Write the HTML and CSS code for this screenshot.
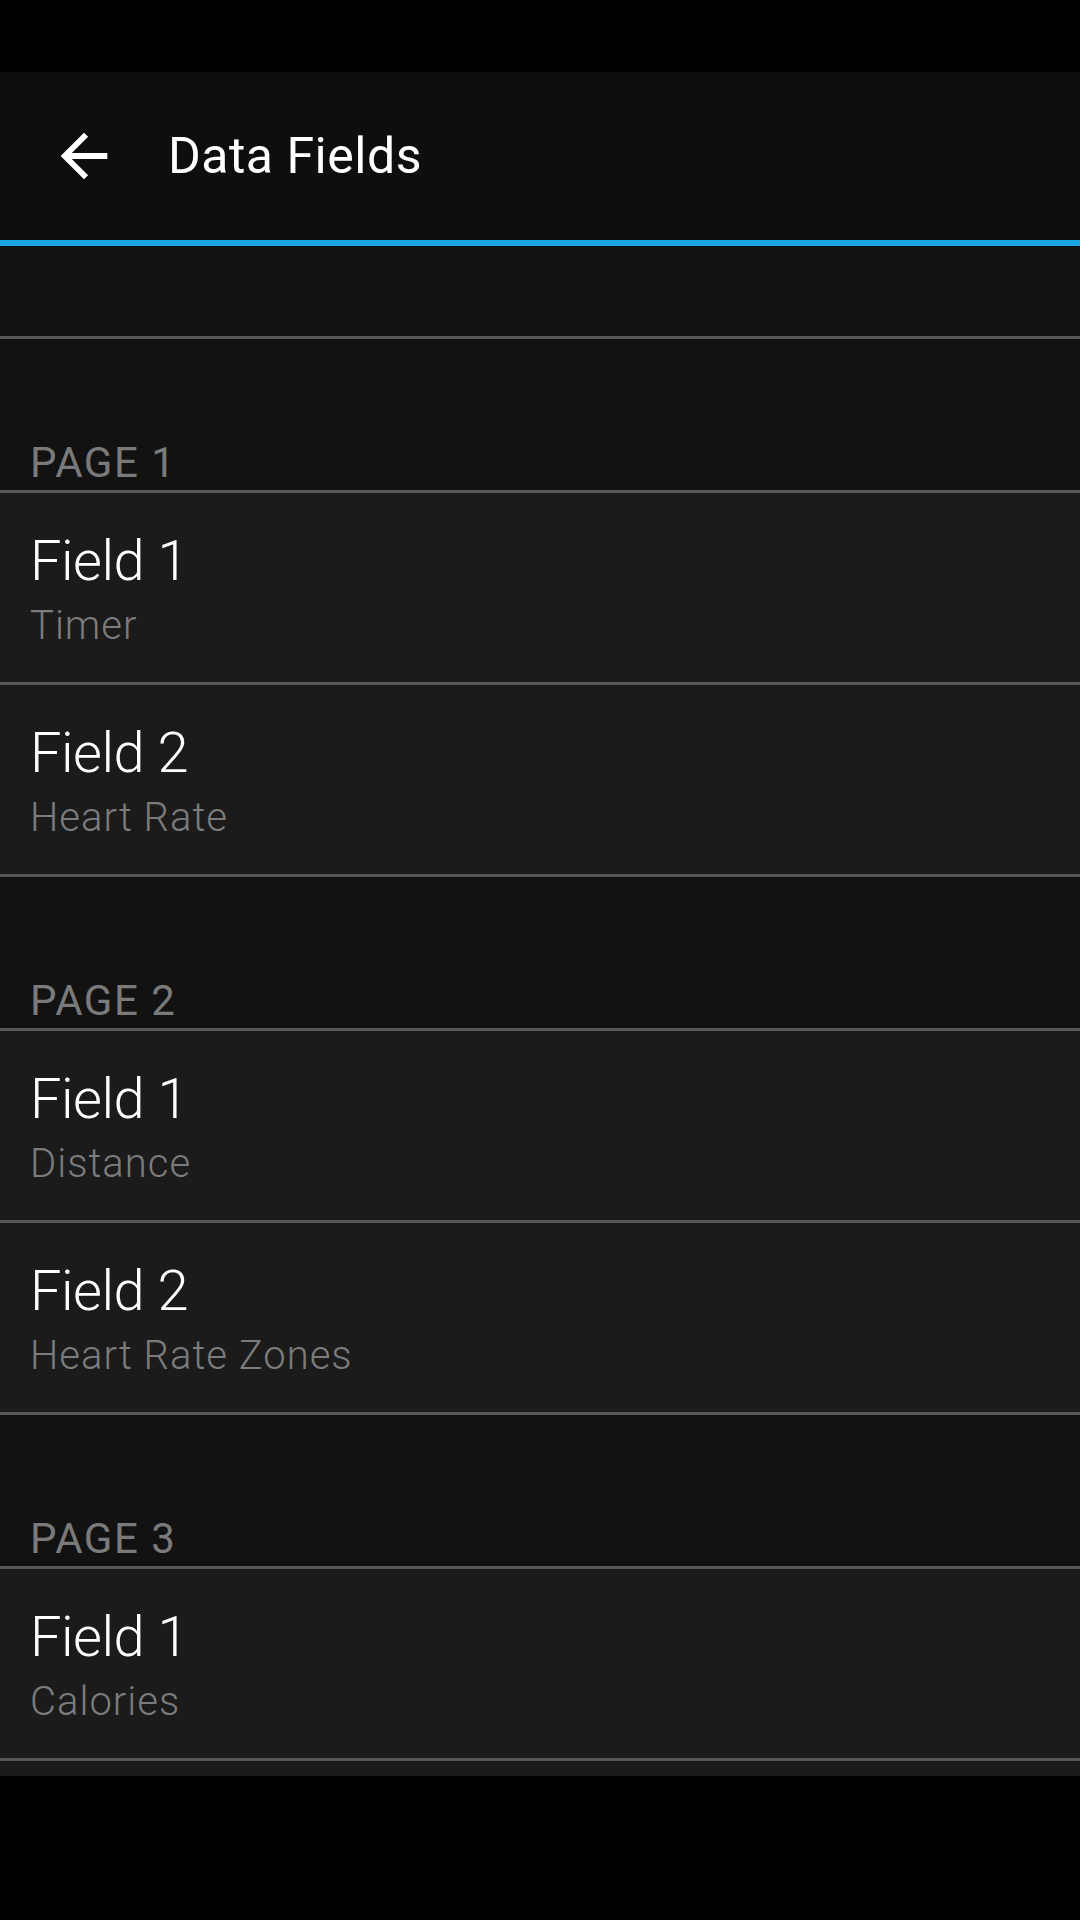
FILE: index.html
```html
<!DOCTYPE html>
<html lang="en">
<head>
    <meta charset="UTF-8">
    <meta name="viewport" content="width=device-width, initial-scale=1.0">
    <title>Data Fields</title>
    <link rel="stylesheet" href="styles.css">
</head>
<body>
    <div class="status-bar"></div>

    <div class="toolbar">
        <svg class="back" width="70" height="70" viewBox="0 0 24 24">
            <path d="M20 11H7.83l5.59-5.59L12 4l-8 8 8 8 1.41-1.41L7.83 13H20v-2z" fill="#fff"/>
        </svg>
        <span class="toolbar-title">Data Fields</span>
    </div>

    <div class="list">
        <div class="spacer"></div>

        <div class="section-header">PAGE 1</div>
        <div class="row">
            <div class="row-title">Field 1</div>
            <div class="row-sub">Timer</div>
        </div>
        <div class="row">
            <div class="row-title">Field 2</div>
            <div class="row-sub">Heart Rate</div>
        </div>

        <div class="section-header">PAGE 2</div>
        <div class="row">
            <div class="row-title">Field 1</div>
            <div class="row-sub">Distance</div>
        </div>
        <div class="row">
            <div class="row-title">Field 2</div>
            <div class="row-sub">Heart Rate Zones</div>
        </div>

        <div class="section-header">PAGE 3</div>
        <div class="row">
            <div class="row-title">Field 1</div>
            <div class="row-sub">Calories</div>
        </div>
        <div class="row row-cut"></div>
    </div>
</body>
</html>
```

FILE: styles.css
```css
body {
    margin: 0;
    background: #000;
    font-family: Roboto, "Liberation Sans", sans-serif;
}
.status-bar {
    height: 72px;
}
.toolbar {
    height: 168px;
    background: #0e0e0e;
    border-bottom: 6px solid #1ca6e6;
    display: flex;
    align-items: center;
}
.back {
    margin-left: 49px;
}
.toolbar-title {
    margin-left: 49px;
    color: #fff;
    font-size: 50px;
    letter-spacing: 0.5px;
}
.list {
    height: 1530px;
    overflow: hidden;
    background: #1b1b1b;
}
.spacer {
    height: 90px;
    background: #121212;
    border-bottom: 3px solid #575757;
}
.section-header {
    box-sizing: border-box;
    height: 154px;
    padding: 0 0 6px 30px;
    display: flex;
    align-items: flex-end;
    background: #121212;
    border-bottom: 3px solid #575757;
    color: #7a7a7a;
    font-size: 42px;
    line-height: 42px;
    letter-spacing: 1.5px;
}
.row {
    box-sizing: border-box;
    height: 192px;
    padding: 40px 0 0 30px;
    background: #1b1b1b;
    border-bottom: 3px solid #575757;
}
.row-title {
    color: #fff;
    font-size: 56px;
    font-weight: 300;
    line-height: 56px;
    letter-spacing: -0.5px;
}
.row-sub {
    margin-top: 17px;
    color: #7c7c7c;
    font-size: 40px;
    font-weight: 300;
    line-height: 40px;
    letter-spacing: 1px;
}
```
